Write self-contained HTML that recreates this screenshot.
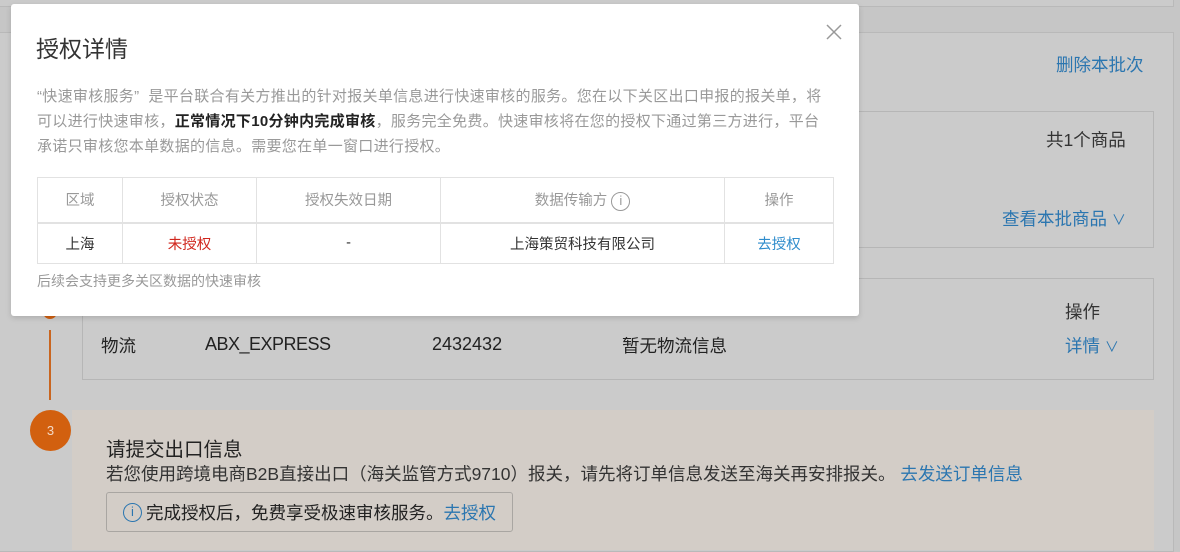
<!DOCTYPE html>
<html><head><meta charset="utf-8"><style>
*{margin:0;padding:0;box-sizing:border-box}
body{width:1180px;height:543px;overflow:hidden;background:#c6c6c6;font-family:"Liberation Sans","Noto Sans CJK SC",sans-serif;position:relative}
.a{position:absolute}
.blue{color:#2b76b0}
</style></head><body>
<div class="a" style="left:-2px;top:-2px;width:1176px;height:9px;background:#cbcbcb;border:1px solid #b9b9b9"></div>
<div class="a" style="left:-2px;top:32px;width:1176px;height:520px;background:#cbcbcb;border:1px solid #b9b9b9"></div>
<div class="a blue" style="left:1056px;top:52px;font-size:17.5px">删除本批次</div>
<div class="a" style="left:82px;top:111px;width:1072px;height:137px;border:1px solid #b6b6b6"></div>
<div class="a" style="left:1046px;top:127px;font-size:17.5px;color:#333">共1个商品</div>
<div class="a blue" style="left:1002px;top:206px;font-size:17.5px">查看本批商品 <span style="font-size:14px">∨</span></div>
<div class="a" style="left:82px;top:278px;width:1072px;height:102px;border:1px solid #b6b6b6"></div>
<div class="a" style="left:1065px;top:299px;font-size:17.5px;color:#333">操作</div>
<div class="a blue" style="left:1065px;top:333px;font-size:17.5px">详情 <span style="font-size:14px">∨</span></div>
<div class="a" style="left:101px;top:333px;font-size:17.5px;color:#222">物流</div>
<div class="a" style="left:205px;top:334px;font-size:18px;color:#222;letter-spacing:-0.5px">ABX_EXPRESS</div>
<div class="a" style="left:432px;top:334px;font-size:18px;color:#222">2432432</div>
<div class="a" style="left:622px;top:333px;font-size:17.5px;color:#222">暂无物流信息</div>
<div class="a" style="left:49px;top:330px;width:2px;height:70px;background:#c9651f"></div>
<div class="a" style="left:43px;top:305px;width:14px;height:14px;border-radius:50%;background:#d2600f"></div>
<div class="a" style="left:72px;top:410px;width:1082px;height:140px;background:#d3cdc7"></div>
<div class="a" style="left:30px;top:410px;width:41px;height:41px;border-radius:50%;background:#d2600f;color:#f3d9c6;font-size:13px;text-align:center;line-height:41px">3</div>
<div class="a" style="left:106px;top:433px;font-size:19.5px;color:#222">请提交出口信息</div>
<div class="a" style="left:106px;top:461px;font-size:17.5px;color:#333">若您使用跨境电商B2B直接出口（海关监管方式9710）报关，请先将订单信息发送至海关再安排报关。 <span class="blue">去发送订单信息</span></div>
<div class="a" style="left:106px;top:492px;width:407px;height:40px;border:1px solid #a9a6a2;border-radius:3px;font-size:17.5px;color:#222;display:flex;align-items:center;padding-left:16px"><span style="display:inline-block;width:19px;height:19px;border:1.5px solid #2b76b0;border-radius:50%;color:#2b76b0;font-size:13px;line-height:16px;text-align:center;margin-right:4px">i</span>完成授权后，免费享受极速审核服务。<span class="blue">去授权</span></div>

<div class="a" style="left:11px;top:4px;width:848px;height:312px;background:#fff;border-radius:3px;box-shadow:0 2px 6px rgba(0,0,0,.15)">
<div class="a" style="left:25px;top:26px;font-size:23px;color:#333">授权详情</div>
<svg class="a" style="left:815px;top:20px" width="16" height="16"><path d="M1 1L15 15M15 1L1 15" stroke="#999" stroke-width="1.5"/></svg>
<div class="a" style="left:26px;top:80px;width:792px;font-size:15px;letter-spacing:0.3px;line-height:25px;color:#999">“快速审核服务”&nbsp; 是平台联合有关方推出的针对报关单信息进行快速审核的服务。您在以下关区出口申报的报关单，将可以进行快速审核，<b style="color:#222">正常情况下10分钟内完成审核</b>，服务完全免费。快速审核将在您的授权下通过第三方进行，平台承诺只审核您本单数据的信息。需要您在单一窗口进行授权。</div>
<table class="a" style="left:26px;top:173px;width:797px;border-collapse:collapse;font-size:14.5px;text-align:center">
<tr style="height:45px;color:#999"><td style="width:85px;border:1px solid #e2e2e2;border-bottom:2px solid #e2e2e2">区域</td><td style="width:134px;border:1px solid #e2e2e2;border-bottom:2px solid #e2e2e2">授权状态</td><td style="width:184px;border:1px solid #e2e2e2;border-bottom:2px solid #e2e2e2">授权失效日期</td><td style="width:284px;border:1px solid #e2e2e2;border-bottom:2px solid #e2e2e2">数据传输方 <span style="display:inline-block;width:19px;height:19px;border:1.5px solid #999;border-radius:50%;font-size:13px;line-height:16px;vertical-align:middle">i</span></td><td style="border:1px solid #e2e2e2;border-bottom:2px solid #e2e2e2">操作</td></tr>
<tr style="height:41px;color:#333"><td style="border:1px solid #e2e2e2">上海</td><td style="border:1px solid #e2e2e2;color:#d0261d">未授权</td><td style="border:1px solid #e2e2e2">-</td><td style="border:1px solid #e2e2e2">上海策贸科技有限公司</td><td style="border:1px solid #e2e2e2;color:#2f8ccc">去授权</td></tr>
</table>
<div class="a" style="left:26px;top:267px;font-size:14px;color:#999">后续会支持更多关区数据的快速审核</div>
</div>
</body></html>
